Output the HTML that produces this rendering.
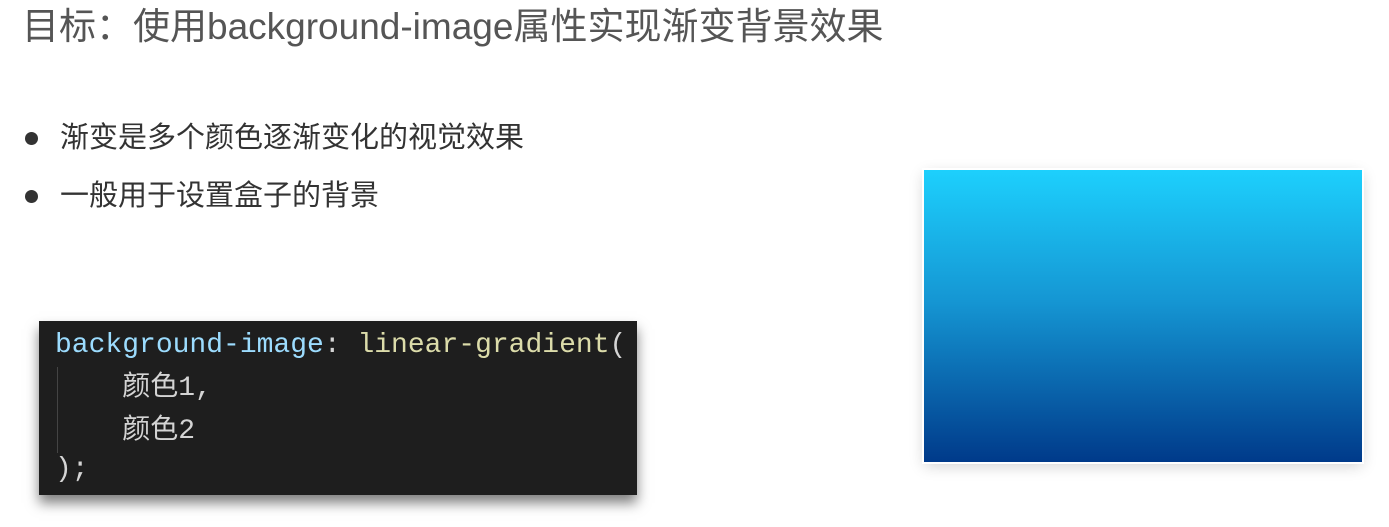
<!DOCTYPE html>
<html><head><meta charset="utf-8"><style>
body{margin:0;width:1389px;height:527px;background:#fff;position:relative;overflow:hidden;font-family:"Liberation Sans","Noto Sans CJK SC",sans-serif}
.t{position:absolute;left:22px;top:2px;font-size:37px;line-height:50px;color:#555;white-space:nowrap}
.b{position:absolute;left:60px;font-size:29px;line-height:36px;color:#333;white-space:nowrap}
.d{position:absolute;left:25px;width:13px;height:13px;border-radius:50%;background:#333}
.code{position:absolute;left:39px;top:321px;width:598px;height:174px;background:#1e1e1e;box-shadow:0 8px 12px rgba(0,0,0,.5);font-family:"Liberation Mono","Noto Sans CJK SC",monospace;font-size:28px;line-height:40px;color:#d4d4d4}
.code div{position:absolute;left:16px;white-space:pre}
.g{position:absolute;left:924px;top:170px;width:438px;height:292px;background:linear-gradient(#1dd0fd,#1596d3 45%,#003a8a);box-shadow:0 0 0 2px #fff,0 4px 14px rgba(0,0,0,.18)}
</style></head><body>
<div class="t">目标：使用background-image属性实现渐变背景效果</div>
<div class="d" style="top:132px"></div><div class="b" style="top:120px">渐变是多个颜色逐渐变化的视觉效果</div>
<div class="d" style="top:190px"></div><div class="b" style="top:178px">一般用于设置盒子的背景</div>
<div class="code">
<div style="top:5px"><span style="color:#9cdcfe">background-image</span>: <span style="color:#dcdcaa">linear-gradient</span>(</div>
<div style="left:18px;top:46px;width:1px;height:86px;background:#444"></div>
<div style="top:48px">    颜色1,</div>
<div style="top:91px">    颜色2</div>
<div style="top:129px">);</div>
</div>
<div class="g"></div>
</body></html>
